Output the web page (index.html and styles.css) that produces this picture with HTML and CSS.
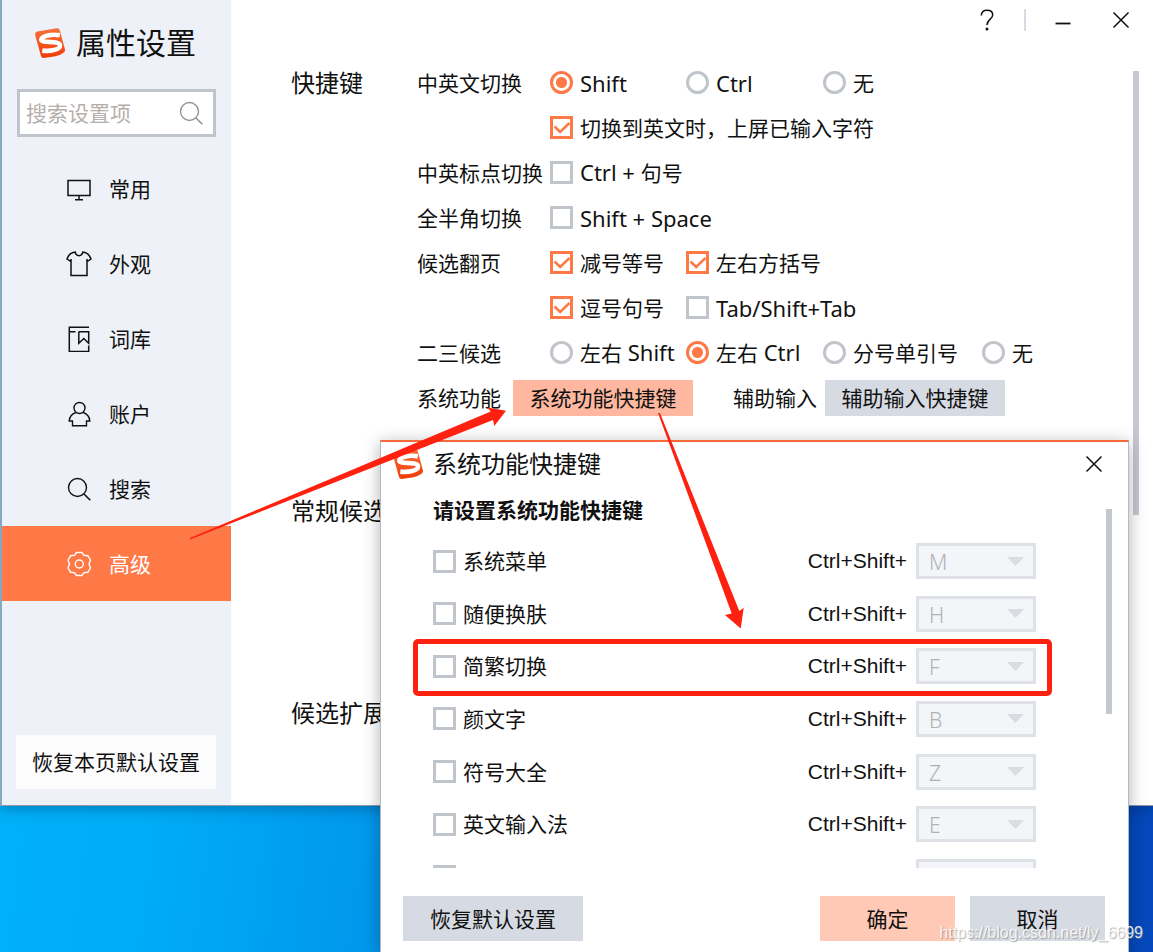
FILE: index.html
```html
<!DOCTYPE html>
<html lang="zh-CN">
<head>
<meta charset="utf-8">
<meta name="viewport" content="width=device-width, initial-scale=1">
<title>属性设置</title>
<link rel="stylesheet" href="styles.css">
</head>
<body>
<svg class="defs" width="0" height="0" aria-hidden="true">
  <symbol id="logo" viewBox="0 0 32 32">
    <linearGradient id="logo-fill" x1="0" y1="0" x2="0" y2="1">
      <stop offset="0" stop-color="#f9703a"/>
      <stop offset="1" stop-color="#f03c08"/>
    </linearGradient>
    <path d="M3.5 4.6 22.6 1.2Q25 .8 25.7 3L31 22.500Q31.500 24.500 29.500 25.700 26.500 28 21.500 29.200L9.800 31Q7.600 31.200 7 29L1.200 8.200Q.6 5.200 3.500 4.600Z" fill="url(#logo-fill)"/>
    <path d="M25.800 8.300C18 6.800 7.500 8.600 7.300 12.600 7.200 16.800 25.800 13.200 26 18.300 26.200 22.800 16 24.600 8.300 23.600" fill="none" stroke="#fff" stroke-width="4.600"/>
  </symbol>
  <symbol id="close" viewBox="0 0 20 20">
    <path d="M2.500 2.500 17.500 17.500M17.500 2.500 2.500 17.500" fill="none" stroke="currentColor" stroke-width="1.500"/>
  </symbol>
  <symbol id="search" viewBox="0 0 26 26">
    <circle cx="11.500" cy="11.500" r="9" fill="none" stroke="currentColor" stroke-width="1.400"/>
    <path d="M18 18 24.300 24.300" fill="none" stroke="currentColor" stroke-width="1.600"/>
  </symbol>
</svg>

<div class="desktop">
  <div class="window">
    <aside class="sidebar">
      <h1 class="brand"><svg class="logo"><use href="#logo"/></svg>属性设置</h1>
      <div class="search">
        <input class="search-input" type="text" placeholder="搜索设置项" aria-label="搜索设置项">
        <svg class="icon"><use href="#search"/></svg>
      </div>
      <nav class="nav">
        <a class="nav-item" href="#common">
          <svg class="icon" viewBox="0 0 26 26"><path d="M2 4.500h22v15H2zM13 19.500v4M9 23.700h8" fill="none" stroke="currentColor" stroke-width="1.500"/></svg>常用</a>
        <a class="nav-item" href="#look">
          <svg class="icon" viewBox="0 0 26 26"><path d="M7 1.500 9.300 1.200C10 5.800 16 5.800 16.700 1.200L19 1.500C22 2.500 24 5 25 8L21 10.700V24.500H5V10.700L1 8C2 5 4 2.500 7 1.500ZM5 10.700V8M21 10.700V8" fill="none" stroke="currentColor" stroke-width="1.500"/></svg>外观</a>
        <a class="nav-item" href="#dict">
          <svg class="icon" viewBox="0 0 26 26"><path d="M23 1.300H3.300V25.500H22.700V19.500M3.300 5.700H9.500M12.800 5.700H22.700V17.300L17.800 12.500 12.800 17.300V5.700" fill="none" stroke="currentColor" stroke-width="1.500"/></svg>词库</a>
        <a class="nav-item" href="#account">
          <svg class="icon" viewBox="0 0 26 26"><circle cx="13.500" cy="7" r="5.500" fill="none" stroke="currentColor" stroke-width="1.400"/><path d="M9.800 11.500C6 12.800 3.500 15.500 3.200 20H6.500V24.800H20.500V20H23.800C23.500 15.500 21 12.800 17.200 11.500" fill="none" stroke="currentColor" stroke-width="1.400"/></svg>账户</a>
        <a class="nav-item" href="#find">
          <svg class="icon"><use href="#search"/></svg>搜索</a>
        <a class="nav-item active" href="#advanced" aria-current="page">
          <svg class="icon" viewBox="0 0 26 26"><path d="M10.500 1.500H16L18 4.300 22 4.800 24.500 9 23 13 24.500 17 22 21.200 18 21.700 16 24.500H10.500L8.500 21.700 4.500 21.200 2 17 3.500 13 2 9 4.500 4.800 8.500 4.300Z" fill="none" stroke="currentColor" stroke-width="1.400" stroke-linejoin="round"/><circle cx="13.300" cy="13" r="4" fill="none" stroke="currentColor" stroke-width="1.400"/></svg>高级</a>
      </nav>
      <button class="reset" type="button">恢复本页默认设置</button>
    </aside>

    <main class="main">
      <div class="titlebar">
        <button class="tool" type="button" aria-label="帮助"><svg class="glyph" viewBox="0 0 20 24"><path d="M4.300 7.500C4.300 4 6.500 2.300 10 2.300 13.500 2.300 15.700 4 15.700 7 15.700 11 10 11.500 10 17" fill="none" stroke="currentColor" stroke-width="1.500"/><circle cx="10" cy="21" r="1.500" fill="currentColor"/></svg></button>
        <span class="divider"></span>
        <button class="tool" type="button" aria-label="最小化"><svg class="glyph" viewBox="0 0 20 24"><path d="M2.500 15.500h15" stroke="currentColor" stroke-width="1.800"/></svg></button>
        <button class="tool" type="button" aria-label="关闭"><svg class="glyph"><use href="#close"/></svg></button>
      </div>
      <div class="scroller">
        <div class="sections">
          <section class="section">
            <h2 class="section-title">快捷键</h2>
            <div class="rows">
              <div class="row"><span class="row-label">中英文切换</span>
                <div class="options">
                  <label class="option"><input class="radio" type="radio" name="lang" checked><span class="latin">Shift</span></label>
                  <label class="option"><input class="radio" type="radio" name="lang"><span class="latin">Ctrl</span></label>
                  <label class="option"><input class="radio" type="radio" name="lang">无</label>
                </div></div>
              <div class="row"><span class="row-label"></span>
                <label class="option"><input class="check" type="checkbox" checked>切换到英文时，上屏已输入字符</label></div>
              <div class="row"><span class="row-label">中英标点切换</span>
                <label class="option"><input class="check" type="checkbox"><span><span class="latin">Ctrl + </span>句号</span></label></div>
              <div class="row"><span class="row-label">全半角切换</span>
                <label class="option"><input class="check" type="checkbox"><span class="latin">Shift + Space</span></label></div>
              <div class="row"><span class="row-label">候选翻页</span>
                <div class="options">
                  <label class="option"><input class="check" type="checkbox" checked>减号等号</label>
                  <label class="option"><input class="check" type="checkbox" checked>左右方括号</label>
                </div></div>
              <div class="row"><span class="row-label"></span>
                <div class="options">
                  <label class="option"><input class="check" type="checkbox" checked>逗号句号</label>
                  <label class="option"><input class="check" type="checkbox"><span class="latin">Tab/Shift+Tab</span></label>
                </div></div>
              <div class="row"><span class="row-label">二三候选</span>
                <div class="options">
                  <label class="option"><input class="radio" type="radio" name="second"><span>左右<span class="latin"> Shift</span></span></label>
                  <label class="option"><input class="radio" type="radio" name="second" checked><span>左右<span class="latin"> Ctrl</span></span></label>
                  <label class="option"><input class="radio" type="radio" name="second">分号单引号</label>
                  <label class="option"><input class="radio" type="radio" name="second">无</label>
                </div></div>
              <div class="row"><span class="row-label short">系统功能</span>
                <button class="btn hot" type="button">系统功能快捷键</button>
                <span class="aux-label">辅助输入</span>
                <button class="btn" type="button">辅助输入快捷键</button></div>
            </div>
          </section>
          <section class="section medium"><h2 class="section-title">常规候选</h2></section>
          <section class="section"><h2 class="section-title">候选扩展</h2></section>
        </div>
        <div class="thumb"></div>
      </div>
    </main>
  </div>

  <div class="dialog" role="dialog" aria-labelledby="dialog-title">
    <header class="dialog-head">
      <svg class="logo"><use href="#logo"/></svg>
      <h2 class="dialog-title" id="dialog-title">系统功能快捷键</h2>
      <button class="tool" type="button" aria-label="关闭"><svg class="glyph"><use href="#close"/></svg></button>
    </header>
    <div class="dialog-body">
      <div class="dialog-content">
        <h3 class="hint">请设置系统功能快捷键</h3>
        <div class="viewport">
          <div class="list">
            <div class="item"><label class="option"><input class="check" type="checkbox">系统菜单</label><label class="combo" for="key-m">Ctrl+Shift+</label><select class="key" id="key-m" disabled><option>M</option></select></div>
            <div class="item"><label class="option"><input class="check" type="checkbox">随便换肤</label><label class="combo" for="key-h">Ctrl+Shift+</label><select class="key" id="key-h" disabled><option>H</option></select></div>
            <div class="item"><label class="option"><input class="check" type="checkbox">简繁切换</label><label class="combo" for="key-f">Ctrl+Shift+</label><select class="key" id="key-f" disabled><option>F</option></select></div>
            <div class="item"><label class="option"><input class="check" type="checkbox">颜文字</label><label class="combo" for="key-b">Ctrl+Shift+</label><select class="key" id="key-b" disabled><option>B</option></select></div>
            <div class="item"><label class="option"><input class="check" type="checkbox">符号大全</label><label class="combo" for="key-z">Ctrl+Shift+</label><select class="key" id="key-z" disabled><option>Z</option></select></div>
            <div class="item"><label class="option"><input class="check" type="checkbox">英文输入法</label><label class="combo" for="key-e">Ctrl+Shift+</label><select class="key" id="key-e" disabled><option>E</option></select></div>
            <div class="item"><input class="check" type="checkbox" aria-label="更多"><select class="key" aria-label="更多按键" disabled><option></option></select></div>
          </div>
        </div>
      </div>
      <div class="dialog-thumb"></div>
    </div>
    <footer class="dialog-foot">
      <button class="btn tall" type="button">恢复默认设置</button>
      <div class="actions">
        <button class="btn tall narrow confirm" type="button">确定</button>
        <button class="btn tall narrow" type="button">取消</button>
      </div>
    </footer>
  </div>

  <svg class="marks" width="1153" height="952" viewBox="0 0 1153 952" aria-hidden="true">
    <path d="M190 538 490.700 411.500 487.300 407.500 506 410.700 494.300 426 493 420 190 539.500Z" fill="#ff2110"/>
    <path d="M658 413 660 413 739.300 611 743.700 607.700 740.700 628.500 725 615 731.700 613.500Z" fill="#ff2110"/>
    <rect x="415.500" y="641.500" width="634" height="52" rx="2.500" fill="none" stroke="#ff2110" stroke-width="5"/>
  </svg>
  <p class="watermark">https://blog.csdn.net/ly_6699</p>
</div>
</body>
</html>
```
FILE: styles.css
```css
* {
  box-sizing: border-box;
}

body {
  margin: 0;
  font: 21px/32px "Noto Sans", "Noto Sans CJK SC", sans-serif;
  color: #111;
}

h1, h2, h3, p {
  margin: 0;
  font-size: inherit;
  font-weight: 400;
}

button, input, select {
  margin: 0;
  border: 0;
  border-radius: 0;
  padding: 0;
  font: inherit;
  color: inherit;
}

.defs {
  position: absolute;
}

.desktop {
  position: relative;
  min-height: 100vh;
  overflow: hidden;
  background: linear-gradient(98deg, #00b3fa 0%, #00adf7 20%, #0098ec 38%, #0448bb 96%);
}

/* Settings window */
.window {
  display: flex;
  border-left: 2px solid #86a8c0;
  border-bottom: 1px solid #8f9aa3;
  background: #fff;
  box-shadow: 0 2px 14px rgba(0, 40, 80, 0.4);
}

.sidebar {
  display: flex;
  flex-direction: column;
  flex: 0 0 229px;
  min-width: 0;
  padding: 19px 0 16px;
  background: #eef1f7;
}

.brand {
  display: flex;
  align-items: center;
  gap: 10px;
  padding-left: 32px;
  font-size: 30px;
  line-height: 48px;
}

.logo {
  flex: none;
  width: 32px;
  height: 32px;
}

.search {
  display: flex;
  align-items: center;
  height: 48px;
  margin: 22px 15px 14px;
  padding: 0 9px 0 6px;
  border: 3px solid #c0c4cb;
  background: #fff;
  color: #949494;
}

.search-input {
  flex: 1;
  min-width: 0;
  outline: 0;
  background: none;
}

.search-input::placeholder {
  color: #b5afac;
  opacity: 1;
}

.icon {
  flex: none;
  width: 26px;
  height: 26px;
}

.nav-item {
  display: flex;
  align-items: center;
  gap: 17px;
  height: 75px;
  padding-left: 64px;
  color: #111;
  text-decoration: none;
}

.nav-item.active {
  background: #ff7947;
  color: #fff;
}

.reset {
  height: 54px;
  margin: 134px 15px 0 14px;
  background: #fcfcfd;
}

.main {
  display: flex;
  flex-direction: column;
  flex: 1;
  min-width: 0;
}

.titlebar {
  display: flex;
  align-items: center;
  justify-content: flex-end;
  height: 40px;
  padding-right: 22px;
}

.tool {
  display: grid;
  place-items: center;
  width: 20px;
  height: 24px;
  background: none;
}

.tool + .tool {
  margin-left: 38px;
}

.glyph {
  width: 20px;
  height: 24px;
}

.divider {
  width: 2px;
  height: 22px;
  margin: 0 27px;
  background: #d5dbe2;
}

.scroller {
  display: flex;
  padding: 20px 14px 0 60px;
}

.sections {
  flex: 1;
  min-width: 0;
}

.section {
  display: grid;
  grid-template-columns: 126px 1fr;
  min-height: 45px;
}

.section + .section {
  margin-top: 68px;
}

.section + .section.medium {
  min-height: 134px;
}

.section-title {
  font-size: 24px;
  line-height: 45px;
  white-space: nowrap;
}

.thumb {
  flex: none;
  width: 6px;
  height: 444px;
  margin-top: 11px;
  background: #c3c7d0;
}

.row {
  display: flex;
  align-items: center;
  height: 45px;
  white-space: nowrap;
}

.row-label {
  flex: 0 0 133px;
}

.row-label.short {
  flex-basis: 96px;
}

.aux-label {
  margin: 0 8px 0 40px;
}

.options {
  display: grid;
  grid-template-columns: 136px 137px auto auto;
}

.options .option:nth-child(4) {
  margin-left: 24px;
}

.option {
  display: flex;
  align-items: center;
  gap: 7px;
}

.latin {
  font-size: 22px;
  white-space: pre;
}

.check, .radio {
  flex: none;
  appearance: none;
  width: 23px;
  height: 23px;
  border: 3px solid #c0c4cb;
  background: #fff;
}

.check:checked {
  border-color: #ff7947;
  background: #fff url("data:image/svg+xml,%3Csvg xmlns='http://www.w3.org/2000/svg' viewBox='0 0 23 23'%3E%3Cpath d='M4.500 10.500 10.200 16 19.500 7' fill='none' stroke='%23ff7947' stroke-width='2.600'/%3E%3C/svg%3E") border-box;
}

.radio {
  border-radius: 50%;
}

.radio:checked {
  border-color: #ff7947;
  background: radial-gradient(circle, #ff7947 5px, #fff 6px);
}

.btn {
  width: 180px;
  height: 36px;
  background: #d6dae2;
}

.btn.hot {
  background: #ffb89f;
}

.btn.tall {
  height: 45px;
}

.btn.narrow {
  width: 135px;
}

.btn.confirm {
  background: #ffc9b5;
}

/* Shortcut dialog */
.dialog {
  position: absolute;
  top: 440px;
  bottom: 0;
  left: 380px;
  width: 749px;
  border: 1px solid #b4bac3;
  border-width: 2px 1px 0;
  border-top-color: #f8693a;
  background: #fff;
  box-shadow: 0 3px 16px rgba(0, 0, 0, 0.3);
}

.dialog-head {
  display: flex;
  align-items: center;
  gap: 9px;
  height: 44px;
  padding: 0 24px 0 11px;
}

.dialog-title {
  flex: 1;
  font-size: 24px;
}

.dialog-body {
  display: flex;
  padding-right: 16px;
}

.dialog-content {
  flex: 1;
  padding: 8px 0 0 52px;
}

.hint {
  font-weight: 700;
}

.viewport {
  height: 333px;
  margin-top: 9px;
  overflow: hidden;
}

.list {
  display: grid;
  grid-auto-rows: 1fr;
  height: 368px;
}

.item {
  display: flex;
  align-items: center;
  padding-right: 70px;
}

.combo {
  margin: 0 9px 0 auto;
  font-family: "Liberation Sans", sans-serif;
}

.key {
  appearance: none;
  width: 120px;
  height: 36px;
  padding-left: 10px;
  border: 3px solid #dee1e5;
  background: #f4f5f8 url("data:image/svg+xml,%3Csvg xmlns='http://www.w3.org/2000/svg' viewBox='0 0 17 9'%3E%3Cpath d='M0 0H17L8.500 9Z' fill='%23d9dce1'/%3E%3C/svg%3E") no-repeat right 9px center / 17px 9px;
  color: #aeb2b7;
  font-weight: 300;
  opacity: 1;
}

.check + .key {
  margin-left: auto;
}

.dialog-thumb {
  width: 6px;
  height: 205px;
  margin-top: 23px;
  background: #c3c7d0;
}

.dialog-foot {
  display: flex;
  justify-content: space-between;
  padding: 28px 23px 11px 22px;
}

.actions {
  display: flex;
  gap: 15px;
}

/* Annotations over the windows */
.marks {
  position: absolute;
  top: 0;
  left: 0;
  pointer-events: none;
}

.watermark {
  position: absolute;
  right: 10px;
  bottom: 8px;
  font: 16px/22px "Liberation Sans", sans-serif;
  color: rgba(255, 255, 255, 0.85);
  text-shadow: 1px 1px 1px rgba(120, 120, 120, 0.6);
}
```
